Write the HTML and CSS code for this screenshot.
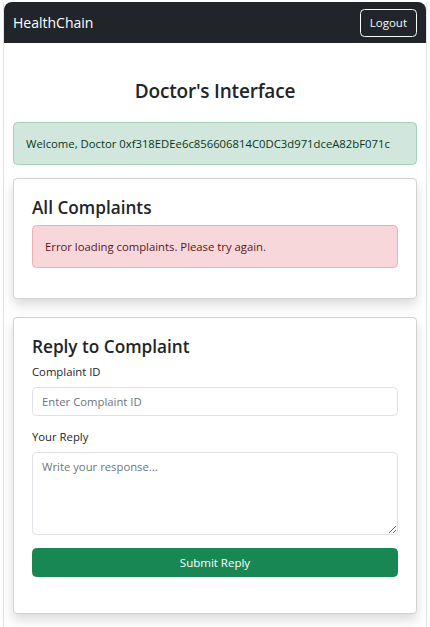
FILE: index.html
```html
<!DOCTYPE html>
<html lang="en">
<head>
<meta charset="utf-8">
<title>HealthChain</title>
<link rel="stylesheet" href="styles.css">
</head>
<body>
<div class="frame">
  <nav class="navbar">
    <span class="brand">HealthChain</span>
    <button class="btn-logout" type="button">Logout</button>
  </nav>
  <main class="container">
    <h3 class="page-title">Doctor's Interface</h3>
    <div class="alert alert-success">Welcome, Doctor 0xf318EDEe6c856606814C0DC3d971dceA82bF071c</div>
    <section class="card">
      <h4 class="card-title">All Complaints</h4>
      <div class="alert alert-danger">Error loading complaints. Please try again.</div>
    </section>
    <section class="card">
      <h4 class="card-title">Reply to Complaint</h4>
      <form class="reply-form">
        <div class="field">
          <label class="form-label" for="cid">Complaint ID</label>
          <input class="form-control" id="cid" type="text" placeholder="Enter Complaint ID">
        </div>
        <div class="field">
          <label class="form-label" for="reply">Your Reply</label>
          <textarea class="form-control textarea" id="reply" rows="4" placeholder="Write your response..."></textarea>
        </div>
        <button class="btn-submit" type="button">Submit Reply</button>
      </form>
    </section>
  </main>
</div>
</body>
</html>
```

FILE: styles.css
```css
* { box-sizing: border-box; }

html, body {
  margin: 0;
  padding: 0;
  height: 100%;
  overflow: hidden;
  background: #ffffff;
}

body {
  font-family: "Open Sans", "Noto Sans", "Liberation Sans", sans-serif;
  font-size: 11.3px;
  line-height: 18px;
  color: #212529;
}

.frame {
  margin: 2px 3px 0 3px;
  border-left: 1px solid #e4e4e4;
  border-right: 1px solid #e4e4e4;
  min-height: 100%;
}

.navbar {
  display: flex;
  align-items: center;
  justify-content: space-between;
  height: 41px;
  padding: 0 9px;
  background: #212529;
  border-radius: 8px 8px 0 0;
}

.brand {
  color: #ffffff;
  font-size: 14px;
  line-height: 20px;
}

.btn-logout {
  height: 28px;
  padding: 0 9px;
  background: transparent;
  border: 1px solid #f8f9fa;
  border-radius: 4.5px;
  color: #f8f9fa;
  font-family: inherit;
  font-size: 11.5px;
}

.container {
  padding: 36px 9px 0;
}

.page-title {
  margin: 0 0 18px;
  text-align: center;
  font-size: 19px;
  line-height: 25px;
  font-weight: 600;
  letter-spacing: -0.2px;
}

.alert {
  padding: 12px;
  border: 1px solid transparent;
  border-radius: 4.5px;
  line-height: 17px;
}

.alert-success {
  background: #d1e7dd;
  border-color: #a3cfbb;
  color: #0a3622;
  margin-bottom: 13px;
}

.alert-danger {
  background: #f8d7da;
  border-color: #f1aeb5;
  color: #58151c;
  margin-bottom: 12px;
}

.card {
  background: #ffffff;
  border: 1px solid rgba(0, 0, 0, 0.175);
  border-radius: 4.5px;
  padding: 18px;
  margin-bottom: 18px;
  box-shadow: 0 6px 12px rgba(0, 0, 0, 0.15);
}

.card-title {
  margin: 0 0 6px;
  font-size: 17.2px;
  line-height: 21.6px;
  font-weight: 600;
}

.reply-form {
  display: flex;
  flex-direction: column;
}

.field {
  display: flex;
  flex-direction: column;
  margin-bottom: 12px;
}

.form-label {
  margin-bottom: 6px;
  line-height: 18px;
}

.form-control {
  width: 100%;
  height: 29px;
  padding: 4.5px 9px;
  border: 1px solid #dee2e6;
  border-radius: 4.5px;
  font-family: inherit;
  font-size: 11.3px;
  line-height: 18px;
  color: #212529;
  background: #fff;
}

.form-control::placeholder {
  color: #6c757d;
}

.textarea {
  height: 83px;
  resize: vertical;
}

.btn-submit {
  height: 29px;
  margin: 1px 0 18px;
  border: 1px solid #198754;
  border-radius: 4.5px;
  background: #198754;
  color: #ffffff;
  font-family: inherit;
  font-size: 11.5px;
}
```
